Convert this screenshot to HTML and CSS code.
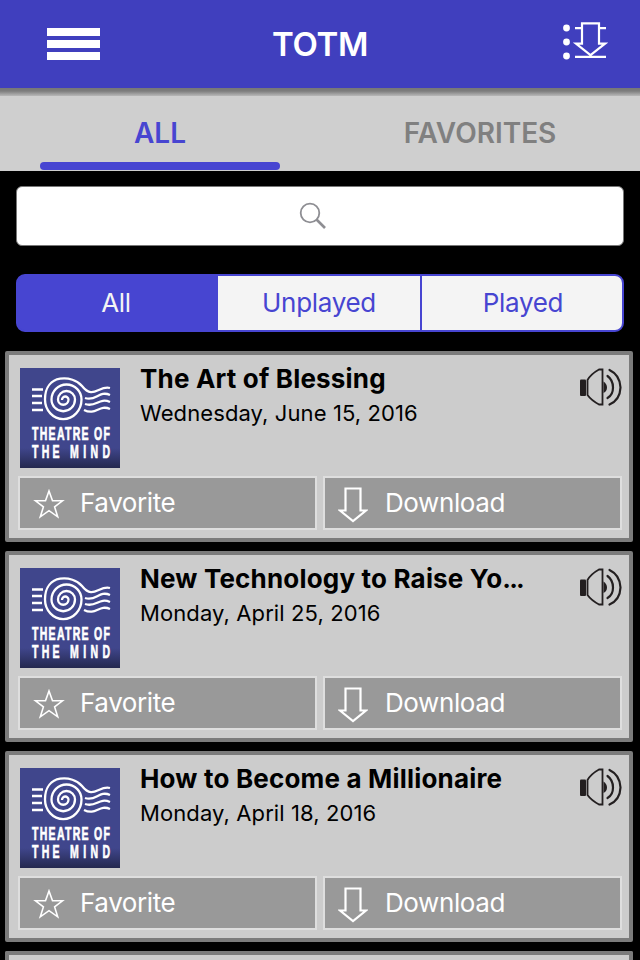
FILE: index.html
```html
<!DOCTYPE html>
<html lang="en">
<head>
  <meta charset="UTF-8" />
  <meta name="viewport" content="width=device-width, initial-scale=1.0"/>
  <title>TOTM</title>
  <link rel="stylesheet" href="styles.css">
</head>
<body>

<!-- Shared icons -->
<svg class="sprite" aria-hidden="true">
  <symbol id="swirl" viewBox="0 0 100 56">
    <g fill="none" stroke="#fff" stroke-width="2.3">
      <path d="M42 32A3.25 3.25 0 0 1 48.5 31.5A5.25 5.25 0 0 1 38 31.5A8.5 8.5 0 0 1 55 31.5A11.75 11.75 0 0 1 31.5 31.5A15 15 0 0 1 61.5 31.5A18.25 19.6 0 0 1 25 31.5C25 5 53 7 62 18C73 32 79 17 90 20"/>
      <path d="M65 30C76 34 79 22 90 27M65 36C76 40 79 29 90 34M64 42C76 48 79 36 90 41"/>
      <path d="M12 21.500H23M12 28H22M12 35H22M12 42H23"/>
    </g>
  </symbol>
  <symbol id="speaker" viewBox="0 0 44 42">
    <rect x="2" y="13.5" width="6" height="16.5" rx="1" fill="#231f20"/>
    <path d="M9.500 14Q13 8 21 3.500H24.500V38.500H21Q13 34 9.500 29Z" fill="none" stroke="#231f20" stroke-width="1.800"/>
    <path d="M25.500 15.500Q29 18 29 21.500T25.500 27Z" fill="#231f20"/>
    <path d="M29.500 10Q35 14 35 21.500T29.500 32M31.500 4Q42 9 42.500 21.500Q42 34 31.500 38.500" fill="none" stroke="#231f20" stroke-width="2.200" stroke-linecap="round"/>
  </symbol>
  <symbol id="star" viewBox="0 0 32 30">
    <path d="M16 2L19.500 11.800H29.500L21.600 17.900L24.700 27.800L16 21.700L7.300 27.800L10.400 17.900L2.500 11.800H12.500Z" fill="none" stroke="#fff" stroke-width="1.600"/>
  </symbol>
  <symbol id="arrow" viewBox="0 0 30 36">
    <path d="M7.500 1.500H22.500V23.500H28L15 34L2 23.500H7.500Z" fill="none" stroke="#fff" stroke-width="2.200"/>
  </symbol>
</svg>

<header>
  <button class="burger" aria-label="Menu">
    <span></span>
    <span></span>
    <span></span>
  </button>
  <h1>TOTM</h1>
  <button class="queue" aria-label="Downloads">
    <svg width="48" height="42" viewBox="0 0 48 42">
      <g fill="#fff">
        <circle cx="6.500" cy="8" r="3.400"/>
        <circle cx="6.500" cy="22" r="3.400"/>
        <circle cx="6.500" cy="36" r="3.400"/>
      </g>
      <path d="M15 8.200H21M40 8.200H46M15 36.800H46M22 3.300H39V23.700H45L30.500 35L16 23.700H22Z" fill="none" stroke="#fff" stroke-width="2.200"/>
    </svg>
  </button>
</header>

<nav class="tabs">
  <a class="tab active">ALL</a>
  <a class="tab">FAVORITES</a>
</nav>

<main>
  <div class="search">
    <svg width="28" height="28" viewBox="0 0 28 28">
      <circle cx="11" cy="11" r="9.300" fill="none" stroke="#8e8e93" stroke-width="1.800"/>
      <path d="M17.500 17.500L26 26" stroke="#8e8e93" stroke-width="2.600"/>
    </svg>
  </div>

  <div class="segments">
    <button class="segment selected">All</button>
    <button class="segment">Unplayed</button>
    <button class="segment">Played</button>
  </div>

  <section class="episodes">
    <article class="episode">
      <div class="info">
        <svg class="cover" viewBox="0 0 100 100">
          <use href="#swirl" width="100" height="56"/>
          <text transform="translate(12 72) scale(.6 1)" textLength="130">THEATRE OF</text>
          <text transform="translate(12 90) scale(.6 1)" textLength="46">THE</text>
          <text transform="translate(50 90) scale(.6 1)" textLength="67">MIND</text>
        </svg>
        <div class="text">
          <h2>The Art of Blessing</h2>
          <p>Wednesday, June 15, 2016</p>
        </div>
        <svg class="speaker"><use href="#speaker"/></svg>
      </div>
      <div class="actions">
        <button><svg class="star"><use href="#star"/></svg>Favorite</button>
        <button><svg class="arrow"><use href="#arrow"/></svg>Download</button>
      </div>
    </article>

    <article class="episode">
      <div class="info">
        <svg class="cover" viewBox="0 0 100 100">
          <use href="#swirl" width="100" height="56"/>
          <text transform="translate(12 72) scale(.6 1)" textLength="130">THEATRE OF</text>
          <text transform="translate(12 90) scale(.6 1)" textLength="46">THE</text>
          <text transform="translate(50 90) scale(.6 1)" textLength="67">MIND</text>
        </svg>
        <div class="text">
          <h2>New Technology to Raise Yo<span class="dots">...</span></h2>
          <p>Monday, April 25, 2016</p>
        </div>
        <svg class="speaker"><use href="#speaker"/></svg>
      </div>
      <div class="actions">
        <button><svg class="star"><use href="#star"/></svg>Favorite</button>
        <button><svg class="arrow"><use href="#arrow"/></svg>Download</button>
      </div>
    </article>

    <article class="episode">
      <div class="info">
        <svg class="cover" viewBox="0 0 100 100">
          <use href="#swirl" width="100" height="56"/>
          <text transform="translate(12 72) scale(.6 1)" textLength="130">THEATRE OF</text>
          <text transform="translate(12 90) scale(.6 1)" textLength="46">THE</text>
          <text transform="translate(50 90) scale(.6 1)" textLength="67">MIND</text>
        </svg>
        <div class="text">
          <h2>How to Become a Millionaire</h2>
          <p>Monday, April 18, 2016</p>
        </div>
        <svg class="speaker"><use href="#speaker"/></svg>
      </div>
      <div class="actions">
        <button><svg class="star"><use href="#star"/></svg>Favorite</button>
        <button><svg class="arrow"><use href="#arrow"/></svg>Download</button>
      </div>
    </article>

    <article class="episode peek"></article>
  </section>
</main>

</body>
</html>
```

FILE: styles.css
```css
* {
  margin: 0;
  padding: 0;
  box-sizing: border-box;
}

body {
  height: 960px;
  overflow: hidden;
  font-family: Inter, "Liberation Sans", sans-serif;
  background-color: #000;
  color: #000;
}

button {
  font: inherit;
  color: inherit;
  background: none;
  border: none;
  cursor: pointer;
}

svg {
  display: block;
}

.sprite {
  width: 0;
  height: 0;
  position: absolute;
}

header {
  height: 88px;
  padding: 0 32px 0 47px;
  display: grid;
  grid-template-columns: 83px 1fr 98px;
  align-items: center;
  background-color: #403fbe;
  color: #fff;
}

.burger {
  width: 53px;
  display: flex;
  flex-direction: column;
  gap: 4px;
}

.burger span {
  height: 8px;
  background: #fff;
}

header h1 {
  text-align: center;
  font-size: 33px;
  font-weight: 560;
  letter-spacing: -0.3px;
}

.queue {
  justify-self: end;
  margin-bottom: 6px;
}

/* Tabs */

.tabs {
  height: 83px;
  padding-top: 8px;
  display: flex;
  background: linear-gradient(#777 0, #7d7d7d 3px, #b8b8b8 8px, #cfcfcf 8px);
}

.tab {
  flex: 1;
  display: flex;
  flex-direction: column;
  align-items: center;
  font-size: 28px;
  font-weight: 600;
  line-height: 34px;
  padding-top: 20px;
  color: #808080;
}

.tab.active {
  color: #4745d1;
}

.tab.active::after {
  content: '';
  width: 240px;
  height: 8px;
  margin-top: 12px;
  border-radius: 4px;
  background: #4745d1;
}

/* Search and filter */

.search {
  height: 60px;
  margin: 15px 16px 28px;
  padding: 15px 0 0 282px;
  background: #fff;
  border: 1px solid #777;
  border-radius: 6px;
}

.segments {
  height: 58px;
  margin: 0 16px 19px;
  display: grid;
  grid-template-columns: 200px 202px 1fr;
  border: 2px solid #4745d1;
  border-radius: 9px;
  overflow: hidden;
  background: #4745d1;
}

.segment {
  padding-bottom: 1px;
  font-size: 26px;
  letter-spacing: -0.3px;
  background: #f4f4f4;
  color: #4745d1;
}

.segment.selected {
  padding-right: 4px;
  background: #4745d1;
  color: #f4f4f4;
}

.segment + .segment + .segment {
  padding-left: 2px;
  border-left: 2px solid #4745d1;
}

/* Episodes */

.episodes {
  padding: 0 7px 0 5px;
  display: flex;
  flex-direction: column;
  gap: 9px;
}

.episode {
  height: 191px;
  padding: 13px 7px 0 9px;
  background: #ccc;
  border: 4px solid #7b7b7b;
  border-radius: 2px;
}

/* next card, only its top edge is in view */
.episode.peek {
  height: 9px;
  padding: 0;
  border-bottom: none;
  border-radius: 2px 2px 0 0;
}

.info {
  height: 108px;
  padding-left: 2px;
  display: flex;
}

.cover {
  width: 100px;
  height: 100px;
  margin-right: 20px;
  background: linear-gradient(#40468c 80%, #24284f);
}

.cover text {
  fill: #fff;
  stroke: #fff;
  stroke-width: 0.7px;
  font-family: "Liberation Sans", sans-serif;
  font-weight: bold;
  font-size: 17.5px;
}

.text {
  flex: 1;
}

.text h2 {
  margin-top: -5px;
  font-size: 26px;
  font-weight: 700;
  line-height: 32px;
  letter-spacing: 0.18px;
  white-space: nowrap;
}

.dots {
  letter-spacing: -1.8px;
}

.text p {
  margin-top: 4px;
  font-size: 22px;
  line-height: 28px;
  letter-spacing: 0.1px;
}

.speaker {
  width: 44px;
  height: 42px;
  margin-top: -2px;
}

.actions {
  display: grid;
  grid-template-columns: 299px 299px;
  gap: 6px;
}

.actions button {
  height: 54px;
  display: flex;
  align-items: center;
  background: #999;
  border: 2px solid #dedede;
  color: #fff;
  font-size: 26px;
  letter-spacing: -0.4px;
  line-height: 48px;
}

.star {
  width: 32px;
  height: 30px;
  margin: 2px 15px 0 13px;
}

.arrow {
  width: 30px;
  height: 36px;
  margin: 4px 17px 0 13px;
}
```
